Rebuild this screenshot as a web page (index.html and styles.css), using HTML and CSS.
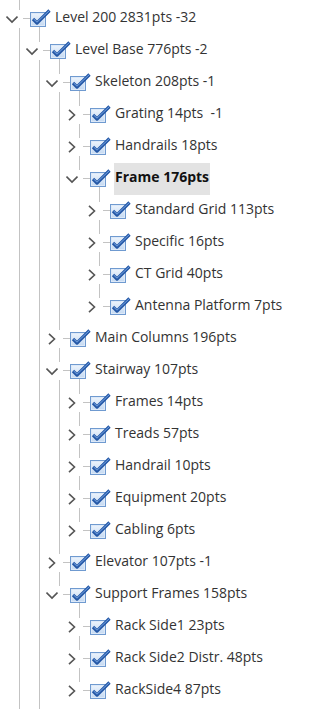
FILE: index.html
```html
<!DOCTYPE html>
<html lang="en">
<head>
    <meta charset="UTF-8">
    <meta name="viewport" content="width=device-width, initial-scale=1.0">
    <title>Level tree</title>
    <link rel="stylesheet" href="styles.css">
</head>
<body>

    <!-- shared icons -->
    <svg class="defs" width="0" height="0">
        <defs>
            <linearGradient id="cbFill" x1="0" y1="0" x2="0" y2="1">
                <stop offset="0" stop-color="#eef5fd"/>
                <stop offset="1" stop-color="#c3d8f1"/>
            </linearGradient>
            <symbol id="ck" viewBox="0 0 22 18">
                <rect x="0.5" y="3.5" width="15" height="14" fill="url(#cbFill)" stroke="#6f9ad0"/>
                <rect x="1.5" y="4.5" width="13" height="12" fill="none" stroke="#dde9f8"/>
                <path d="M3 10 L7 14 L19.5 1.5" fill="none" stroke="#2457a6" stroke-width="3.2" stroke-linejoin="round"/>
                <path d="M3.6 10 L7 13.2 L19 1.9" fill="none" stroke="#78a6e2" stroke-width="1"/>
            </symbol>
            <symbol id="down" viewBox="0 0 12 12">
                <path d="M0.5 3.5 L6 9 L11.5 3.5" fill="none" stroke="#555" stroke-width="1.6"/>
            </symbol>
            <symbol id="right" viewBox="0 0 12 12">
                <path d="M3 0.8 L8.5 6 L3 11.2" fill="none" stroke="#555" stroke-width="1.6"/>
            </symbol>
        </defs>
    </svg>

    <div class="tree">
        <div class="row pre"><span class="g v"></span></div>

        <!-- depth 0 -->
        <div class="row">
            <span class="tw more"><svg class="chev"><use href="#down"/></svg></span>
            <span class="hl"></span>
            <span class="cb open"><svg class="ck"><use href="#ck"/></svg></span>
            <span class="label">Level 200 2831pts -32</span>
        </div>

        <!-- depth 1 -->
        <div class="row">
            <span class="g v"></span>
            <span class="tw more"><svg class="chev"><use href="#down"/></svg></span>
            <span class="hl"></span>
            <span class="cb open"><svg class="ck"><use href="#ck"/></svg></span>
            <span class="label">Level Base 776pts -2</span>
        </div>

        <!-- Skeleton -->
        <div class="row">
            <span class="g v"></span><span class="g v"></span>
            <span class="tw more"><svg class="chev"><use href="#down"/></svg></span>
            <span class="hl"></span>
            <span class="cb open"><svg class="ck"><use href="#ck"/></svg></span>
            <span class="label">Skeleton 208pts -1</span>
        </div>
        <div class="row">
            <span class="g v"></span><span class="g v"></span><span class="g v"></span>
            <span class="tw more"><svg class="chev"><use href="#right"/></svg></span>
            <span class="hl"></span>
            <span class="cb"><svg class="ck"><use href="#ck"/></svg></span>
            <span class="label">Grating 14pts &nbsp;-1</span>
        </div>
        <div class="row">
            <span class="g v"></span><span class="g v"></span><span class="g v"></span>
            <span class="tw more"><svg class="chev"><use href="#right"/></svg></span>
            <span class="hl"></span>
            <span class="cb"><svg class="ck"><use href="#ck"/></svg></span>
            <span class="label">Handrails 18pts</span>
        </div>
        <div class="row">
            <span class="g v"></span><span class="g v"></span><span class="g v"></span>
            <span class="tw"><svg class="chev"><use href="#down"/></svg></span>
            <span class="hl"></span>
            <span class="cb open"><svg class="ck"><use href="#ck"/></svg></span>
            <span class="label selected">Frame 176pts</span>
        </div>
        <div class="row">
            <span class="g v"></span><span class="g v"></span><span class="g v"></span><span class="g"></span>
            <span class="tw more"><svg class="chev"><use href="#right"/></svg></span>
            <span class="hl"></span>
            <span class="cb"><svg class="ck"><use href="#ck"/></svg></span>
            <span class="label">Standard Grid 113pts</span>
        </div>
        <div class="row">
            <span class="g v"></span><span class="g v"></span><span class="g v"></span><span class="g"></span>
            <span class="tw more"><svg class="chev"><use href="#right"/></svg></span>
            <span class="hl"></span>
            <span class="cb"><svg class="ck"><use href="#ck"/></svg></span>
            <span class="label">Specific 16pts</span>
        </div>
        <div class="row">
            <span class="g v"></span><span class="g v"></span><span class="g v"></span><span class="g"></span>
            <span class="tw more"><svg class="chev"><use href="#right"/></svg></span>
            <span class="hl"></span>
            <span class="cb"><svg class="ck"><use href="#ck"/></svg></span>
            <span class="label">CT Grid 40pts</span>
        </div>
        <div class="row">
            <span class="g v"></span><span class="g v"></span><span class="g v"></span><span class="g"></span>
            <span class="tw"><svg class="chev"><use href="#right"/></svg></span>
            <span class="hl"></span>
            <span class="cb"><svg class="ck"><use href="#ck"/></svg></span>
            <span class="label">Antenna Platform 7pts</span>
        </div>

        <!-- Main Columns -->
        <div class="row">
            <span class="g v"></span><span class="g v"></span>
            <span class="tw more"><svg class="chev"><use href="#right"/></svg></span>
            <span class="hl"></span>
            <span class="cb"><svg class="ck"><use href="#ck"/></svg></span>
            <span class="label">Main Columns 196pts</span>
        </div>

        <!-- Stairway -->
        <div class="row">
            <span class="g v"></span><span class="g v"></span>
            <span class="tw more"><svg class="chev"><use href="#down"/></svg></span>
            <span class="hl"></span>
            <span class="cb open"><svg class="ck"><use href="#ck"/></svg></span>
            <span class="label">Stairway 107pts</span>
        </div>
        <div class="row">
            <span class="g v"></span><span class="g v"></span><span class="g v"></span>
            <span class="tw more"><svg class="chev"><use href="#right"/></svg></span>
            <span class="hl"></span>
            <span class="cb"><svg class="ck"><use href="#ck"/></svg></span>
            <span class="label">Frames 14pts</span>
        </div>
        <div class="row">
            <span class="g v"></span><span class="g v"></span><span class="g v"></span>
            <span class="tw more"><svg class="chev"><use href="#right"/></svg></span>
            <span class="hl"></span>
            <span class="cb"><svg class="ck"><use href="#ck"/></svg></span>
            <span class="label">Treads 57pts</span>
        </div>
        <div class="row">
            <span class="g v"></span><span class="g v"></span><span class="g v"></span>
            <span class="tw more"><svg class="chev"><use href="#right"/></svg></span>
            <span class="hl"></span>
            <span class="cb"><svg class="ck"><use href="#ck"/></svg></span>
            <span class="label">Handrail 10pts</span>
        </div>
        <div class="row">
            <span class="g v"></span><span class="g v"></span><span class="g v"></span>
            <span class="tw more"><svg class="chev"><use href="#right"/></svg></span>
            <span class="hl"></span>
            <span class="cb"><svg class="ck"><use href="#ck"/></svg></span>
            <span class="label">Equipment 20pts</span>
        </div>
        <div class="row">
            <span class="g v"></span><span class="g v"></span><span class="g v"></span>
            <span class="tw"><svg class="chev"><use href="#right"/></svg></span>
            <span class="hl"></span>
            <span class="cb"><svg class="ck"><use href="#ck"/></svg></span>
            <span class="label">Cabling 6pts</span>
        </div>

        <!-- Elevator -->
        <div class="row">
            <span class="g v"></span><span class="g v"></span>
            <span class="tw more"><svg class="chev"><use href="#right"/></svg></span>
            <span class="hl"></span>
            <span class="cb"><svg class="ck"><use href="#ck"/></svg></span>
            <span class="label">Elevator 107pts -1</span>
        </div>

        <!-- Support Frames -->
        <div class="row">
            <span class="g v"></span><span class="g v"></span>
            <span class="tw"><svg class="chev"><use href="#down"/></svg></span>
            <span class="hl"></span>
            <span class="cb open"><svg class="ck"><use href="#ck"/></svg></span>
            <span class="label">Support Frames 158pts</span>
        </div>
        <div class="row">
            <span class="g v"></span><span class="g v"></span><span class="g"></span>
            <span class="tw more"><svg class="chev"><use href="#right"/></svg></span>
            <span class="hl"></span>
            <span class="cb"><svg class="ck"><use href="#ck"/></svg></span>
            <span class="label">Rack Side1 23pts</span>
        </div>
        <div class="row">
            <span class="g v"></span><span class="g v"></span><span class="g"></span>
            <span class="tw more"><svg class="chev"><use href="#right"/></svg></span>
            <span class="hl"></span>
            <span class="cb"><svg class="ck"><use href="#ck"/></svg></span>
            <span class="label">Rack Side2 Distr. 48pts</span>
        </div>
        <div class="row">
            <span class="g v"></span><span class="g v"></span><span class="g"></span>
            <span class="tw"><svg class="chev"><use href="#right"/></svg></span>
            <span class="hl"></span>
            <span class="cb"><svg class="ck"><use href="#ck"/></svg></span>
            <span class="label">RackSide4 87pts</span>
        </div>

        <div class="row tail"><span class="g v"></span><span class="g v"></span></div>
    </div>

</body>
</html>
```

FILE: styles.css
```css
* {
    margin: 0;
    padding: 0;
    box-sizing: border-box;
}

body {
    font-family: "Open Sans", "Noto Sans", Arial, sans-serif;
    font-size: 14px;
    color: #333;
    background-color: #fff;
    overflow: hidden;
}

.defs {
    display: block;
    width: 0;
    height: 0;
}

.tree {
    display: flex;
    flex-direction: column;
}

.row {
    display: flex;
    height: 32px;
    flex: none;
}

.row.pre {
    height: 3px;
}

.row.tail {
    height: 10px;
}

/* indent guides, one per ancestor level */
.g {
    width: 20px;
    flex: none;
}

.g.v {
    background: linear-gradient(#c3c3c3, #c3c3c3) 19px 0 / 1px 100% no-repeat;
}

/* expander cell: line above, and below when more siblings follow */
.tw {
    width: 20px;
    flex: none;
    display: flex;
    align-items: center;
    background: linear-gradient(#c3c3c3, #c3c3c3) 19px 0 / 1px 7px no-repeat;
}

.tw.more {
    background:
        linear-gradient(#c3c3c3, #c3c3c3) 19px 0 / 1px 7px no-repeat,
        linear-gradient(#c3c3c3, #c3c3c3) 19px 25px / 1px 7px no-repeat;
}

.chev {
    width: 12px;
    height: 12px;
    margin-left: 6px;
    margin-bottom: 1px;
}

.hl {
    width: 10px;
    flex: none;
    background: linear-gradient(#c3c3c3, #c3c3c3) 3px 15px / 7px 1px no-repeat;
}

.cb {
    width: 20px;
    flex: none;
}

.cb.open {
    background: linear-gradient(#c3c3c3, #c3c3c3) 9px 23px / 1px 9px no-repeat;
}

.ck {
    display: block;
    width: 22px;
    height: 18px;
    margin-top: 6px;
}

.label {
    margin-left: 4px;
    padding: 0 1px 4px;
    line-height: 28px;
    white-space: nowrap;
}

.label.selected {
    font-weight: bold;
    background-color: #e3e3e3;
    color: #111;
}
```
